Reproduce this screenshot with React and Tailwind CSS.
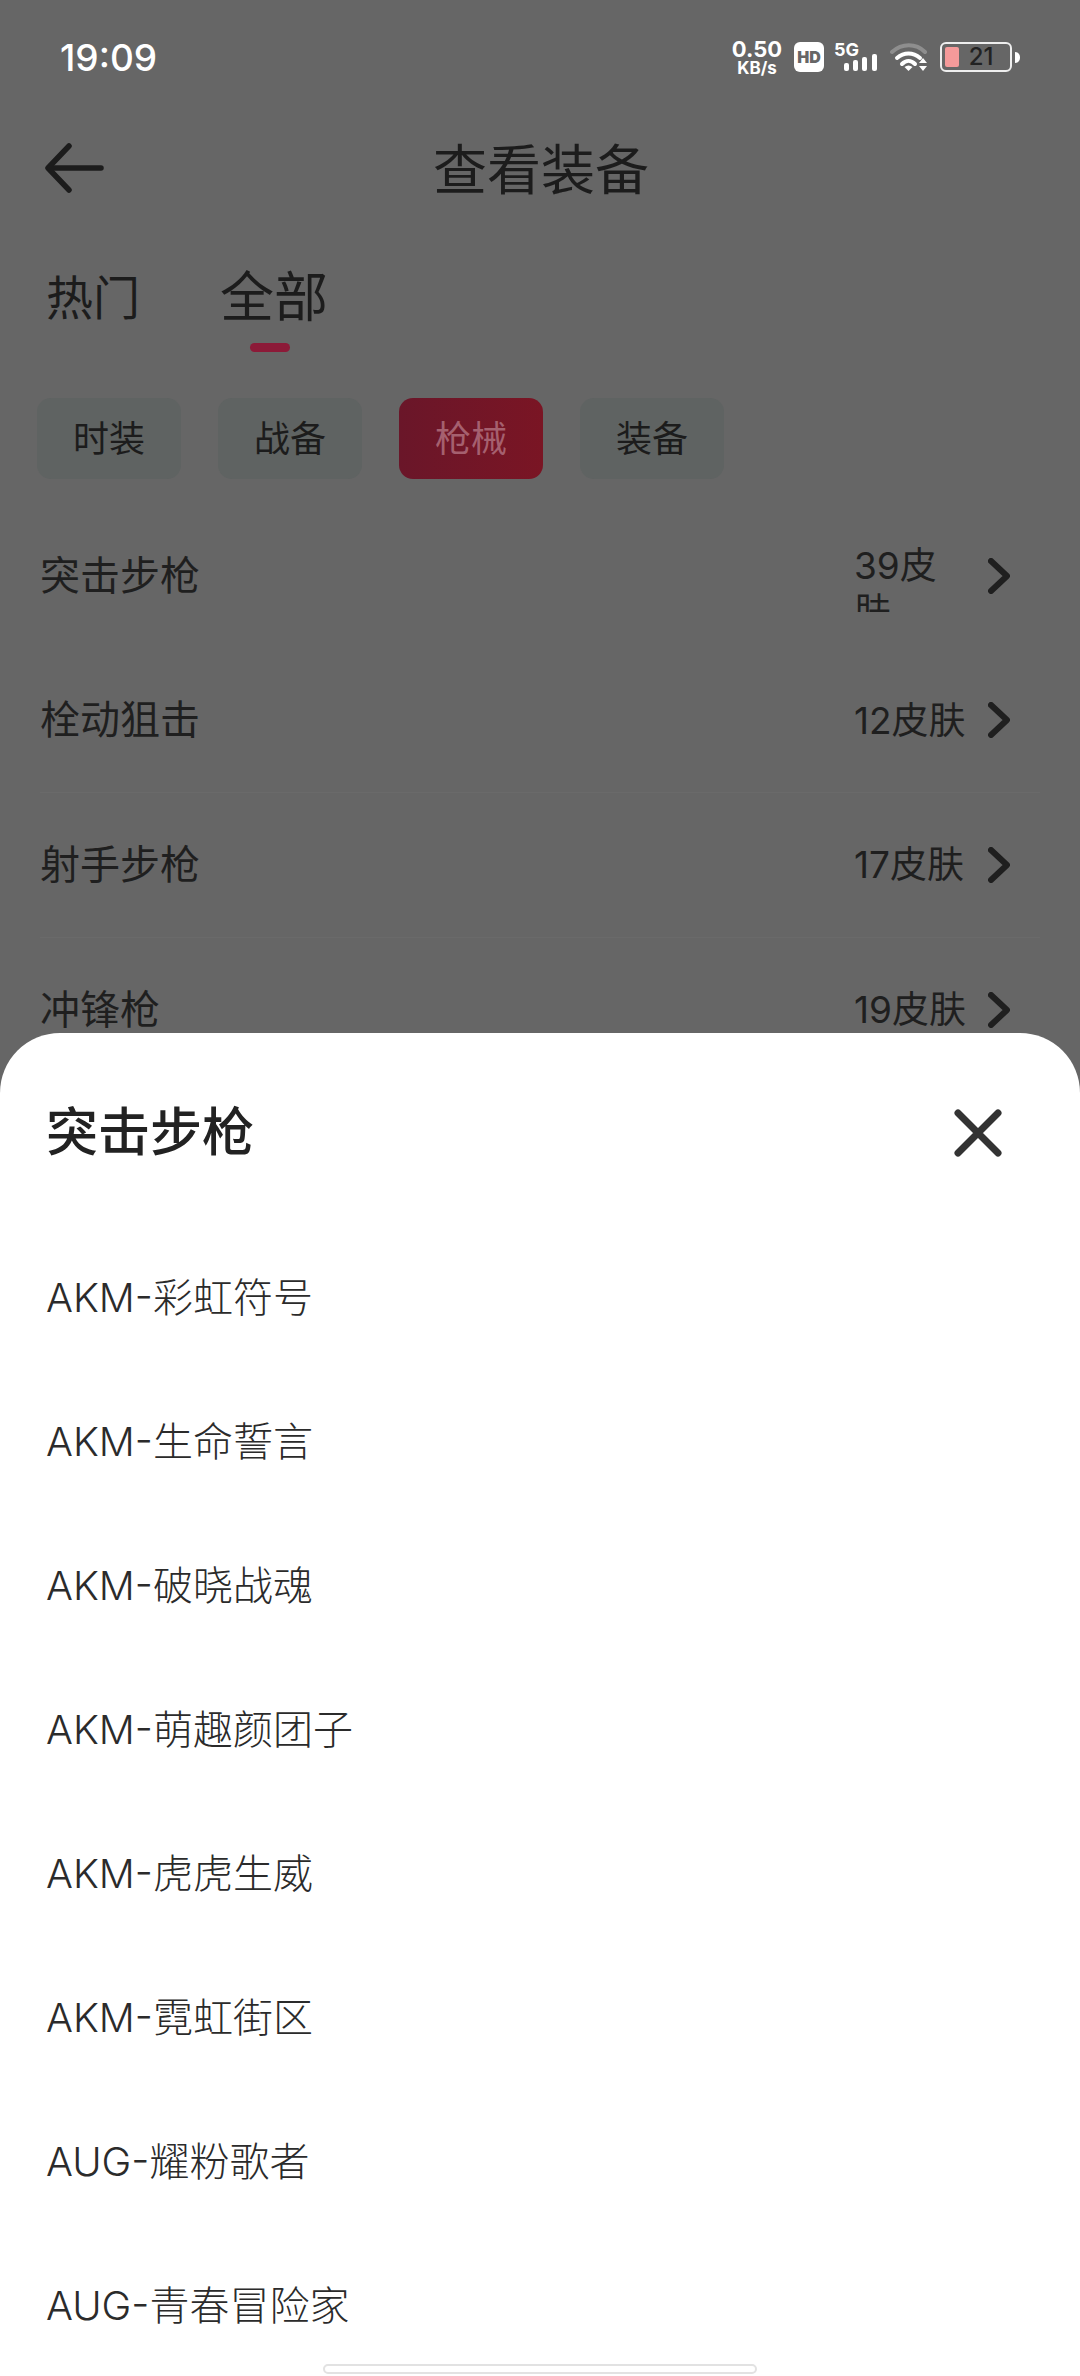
import React from "react";

const FONT = "font-['Inter','Noto_Sans_CJK_SC',sans-serif]";

const categories = [
  { name: "突击步枪", count: "39皮肤", wrap: true },
  { name: "栓动狙击", count: "12皮肤" },
  { name: "射手步枪", count: "17皮肤" },
  { name: "冲锋枪", count: "19皮肤" },
];

const chips = ["时装", "战备", "枪械", "装备"];

const skins = [
  "AKM-彩虹符号",
  "AKM-生命誓言",
  "AKM-破晓战魂",
  "AKM-萌趣颜团子",
  "AKM-虎虎生威",
  "AKM-霓虹街区",
  "AUG-耀粉歌者",
  "AUG-青春冒险家",
];

const StatusBar = () => (
  <div className="flex h-[114px] items-center pl-[60px] pr-[60px]">
    <span className="text-[37px] font-medium leading-none text-white">19:09</span>
    <div className="ml-auto flex items-center">
      <div className="flex w-[54px] flex-col items-center text-white">
        <span className="text-[22px] font-bold leading-[21px]">0.50</span>
        <span className="text-[17px] font-bold leading-[16px]">KB/s</span>
      </div>
      <div className="ml-[10px] flex h-[30px] w-[30px] items-center justify-center rounded-[6px] bg-white text-[16px] font-black leading-none text-[#666666]">
        HD
      </div>
      <div className="relative ml-[10px] h-[32px] w-[46px]">
        <span className="absolute left-0 top-0 text-[18px] font-bold leading-[18px] text-white">5G</span>
        <svg width="46" height="32" viewBox="0 0 46 32" fill="#ffffff">
          <rect x="10" y="22" width="5" height="8" rx="2" />
          <rect x="19" y="19" width="5" height="11" rx="2" />
          <rect x="28" y="16" width="5" height="14" rx="2" />
          <rect x="38" y="13" width="5" height="17" rx="2" />
        </svg>
      </div>
      <svg className="ml-[10px]" width="40" height="30" viewBox="0 0 40 30" fill="none">
        <path d="M2 10 C12 1 26 1 35 10" stroke="#8e8e8e" strokeWidth="4" strokeLinecap="round" />
        <path d="M7 16 C14 10 23 10 30 16" stroke="#ffffff" strokeWidth="4" strokeLinecap="round" />
        <path d="M12 22 C16 18 21 18 25 22" stroke="#ffffff" strokeWidth="4" strokeLinecap="round" />
        <path d="M18.500 29 L14.500 25 C17 23 20 23 22.500 25 Z" fill="#ffffff" />
        <path d="M33 16 L37 21 H29 Z M33 29 L37 24 H29 Z" fill="#ffffff" />
      </svg>
      <div className="ml-[10px] flex items-center">
        <div className="relative flex h-[30px] w-[72px] items-center justify-center rounded-[6px] border-2 border-[#eeeeee] pl-[10px] text-[24px] font-medium leading-none text-[#222222]">
          <span className="absolute left-[3px] top-[3px] h-[20px] w-[14px] rounded-[2px] bg-[#f59a9a]" />
          21
        </div>
        <div className="ml-[3px] h-[11px] w-[5px] rounded-r-full bg-white" />
      </div>
    </div>
  </div>
);

const BackArrow = () => (
  <svg width="60" height="50" viewBox="0 0 60 50" fill="none" stroke="#1c1c1c" strokeWidth="5.500" strokeLinecap="round" strokeLinejoin="round">
    <path d="M25 3 L4 25 L25 47" />
    <path d="M6 25 H57" />
  </svg>
);

const Chevron = () => (
  <svg width="22" height="36" viewBox="0 0 22 36" fill="none" stroke="#1f1f1f" strokeWidth="6" strokeLinecap="round" strokeLinejoin="round">
    <path d="M3 3 L19 18 L3 33" />
  </svg>
);

export default function App() {
  return (
    <div className={`relative h-[2376px] w-[1080px] overflow-hidden bg-[#666666] ${FONT}`}>
      <StatusBar />

      <div className="relative flex h-[108px] items-center pl-[44px]">
        <BackArrow />
        <span className="absolute left-[433px] top-[30px] text-[54px] leading-none text-[#1c1c1c]">查看装备</span>
      </div>

      <div className="flex items-end pl-[46px] pt-[44px] text-[#1c1c1c]">
        <span className="text-[47px] leading-[64px]">热门</span>
        <div className="ml-[80px] flex flex-col items-center">
          <span className="text-[54px] leading-[64px]">全部</span>
        </div>
      </div>
      <div className="ml-[250px] mt-[13px] h-[9px] w-[40px] rounded-full bg-[#8c1a38]" />

      <div className="mt-[46px] flex gap-[37px] pl-[37px]">
        {chips.map((chip) => (
          <div
            key={chip}
            className={
              chip === "枪械"
                ? "flex h-[81px] w-[144px] items-center justify-center rounded-[14px] bg-gradient-to-r from-[#6a1629] to-[#7a1524] text-[36px] text-[#a5606f]"
                : "flex h-[81px] w-[144px] items-center justify-center rounded-[14px] bg-[#5f6362] text-[36px] text-[#1c1c1c]"
            }
          >
            {chip}
          </div>
        ))}
      </div>

      <div className="mx-[40px] mt-[25px]">
        {categories.map((row, i) => (
          <div
            key={row.name}
            className={`flex h-[144.500px] items-center ${i === 1 || i === 2 ? "border-b border-[#6a6a6a]" : ""}`}
          >
            <span className="text-[40px] leading-none text-[#1f1f1f]">{row.name}</span>
            <div
              className={`ml-auto flex h-[72px] w-[117px] overflow-hidden text-[37px] text-[#1f1f1f] ${
                row.wrap ? "items-start pt-[3px] leading-[46px]" : "items-center leading-none"
              }`}
            >
              <span className={row.wrap ? "w-[90px] break-all" : "whitespace-nowrap"}>{row.count}</span>
            </div>
            <div className="ml-[17px] mr-[30px]">
              <Chevron />
            </div>
          </div>
        ))}
      </div>

      <div className="absolute inset-x-0 bottom-0 top-[1033px] rounded-t-[60px] bg-white">
        <div className="flex h-[199px] items-center justify-between pl-[46px] pr-[78px]">
          <span className="text-[52px] font-medium leading-none text-[#222222]">突击步枪</span>
          <svg width="48" height="48" viewBox="0 0 48 48" fill="none" stroke="#333333" strokeWidth="7" strokeLinecap="round">
            <path d="M4 4 L44 44 M44 4 L4 44" />
          </svg>
        </div>
        <div className="-mt-[6px] pl-[46px]">
          {skins.map((skin) => (
            <div key={skin} className="flex h-[144px] items-center text-[40px] font-light leading-none text-[#2b2b2b]">
              {skin}
            </div>
          ))}
        </div>
        <div className="absolute bottom-[2px] left-[323px] h-[10px] w-[434px] rounded-full border-2 border-[#e2e2e2] bg-white" />
      </div>
    </div>
  );
}
